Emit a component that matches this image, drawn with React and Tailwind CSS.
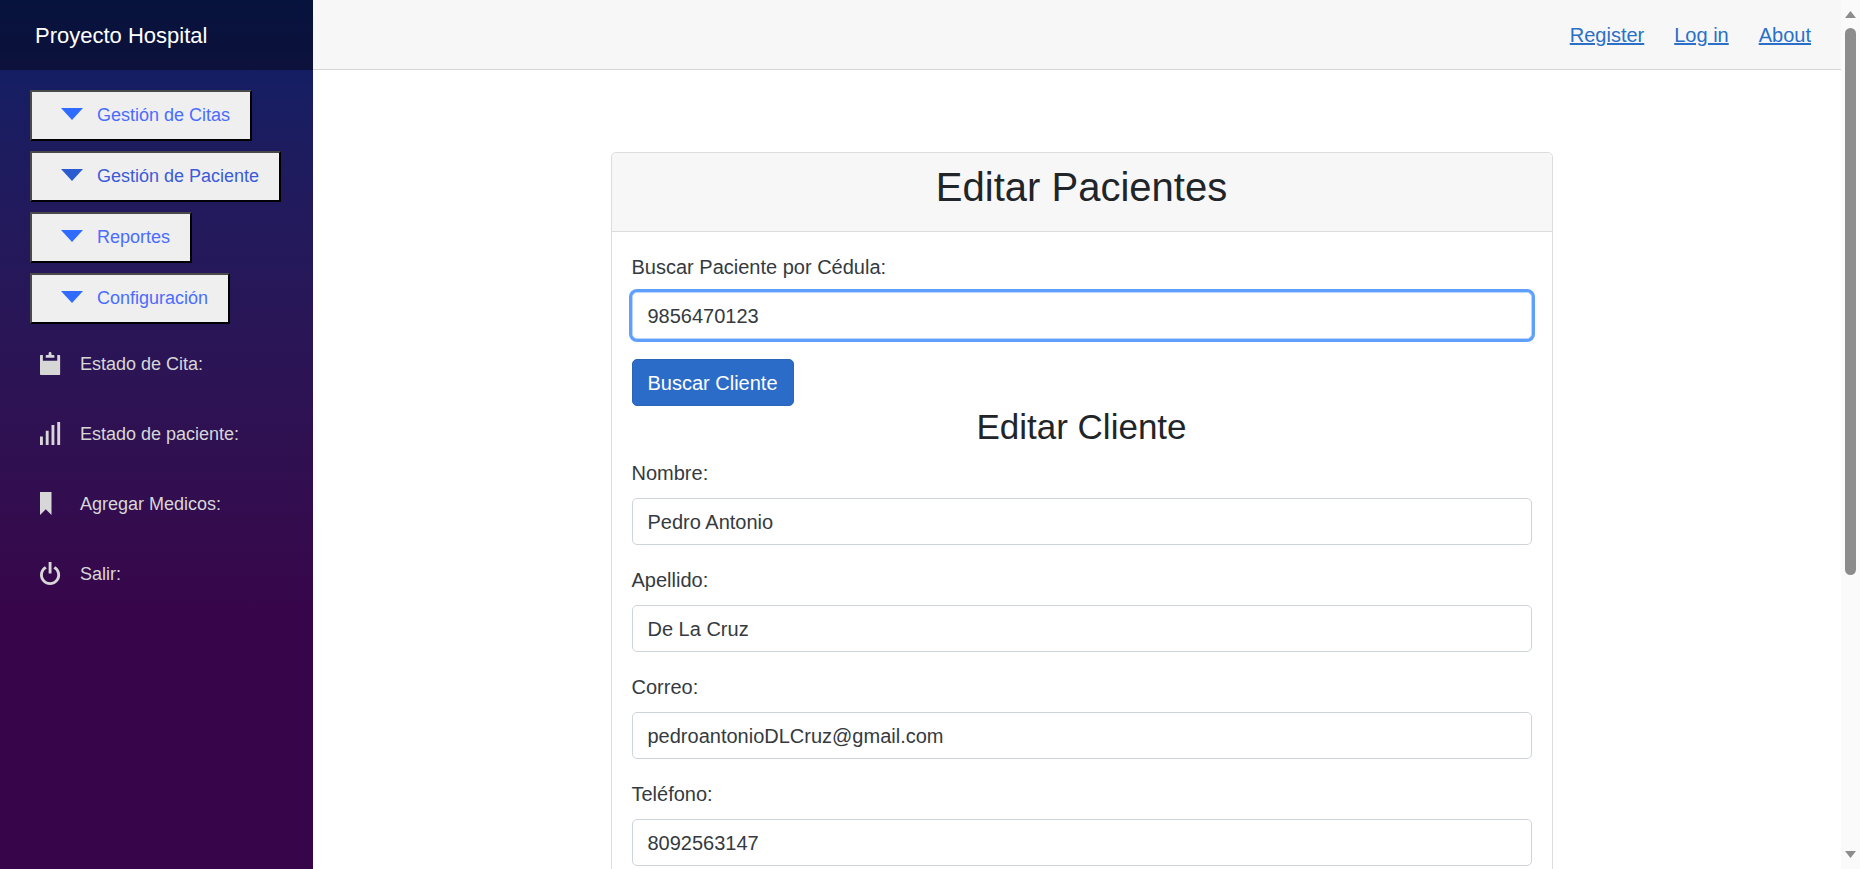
import React from 'react'

const sideButtons = [
  { label: 'Gestión de Citas', width: 'w-[222px]', tone: 'text-[#4a6cff]', arrow: '#2f6bff' },
  { label: 'Gestión de Paciente', width: 'w-[251px]', tone: 'text-[#3b5bd9]', arrow: '#2b5bd0' },
  { label: 'Reportes', width: 'w-[162px]', tone: 'text-[#4a6cff]', arrow: '#2f6bff' },
  { label: 'Configuración', width: 'w-[200px]', tone: 'text-[#4a6cff]', arrow: '#2f6bff' },
]

const sideLinks = [
  { label: 'Estado de Cita:', d: 'M3.5 0c-.28 0-.5.22-.5.5v.5h-.75c-.14 0-.25.11-.25.25v.75h3v-.75c0-.14-.11-.25-.25-.25h-.75v-.5c0-.28-.22-.5-.5-.5zm-3.25 1c-.14 0-.25.11-.25.25v6.5c0 .14.11.25.25.25h6.5c.14 0 .25-.11.25-.25v-6.5c0-.14-.11-.25-.25-.25h-.75v2h-5v-2h-.75z' },
  { label: 'Estado de paciente:', d: 'M6 0v8h1v-8h-1zm-2 1v7h1v-7h-1zm-2 2v5h1v-5h-1zm-2 2v3h1v-3h-1z' },
  { label: 'Agregar Medicos:', d: 'M0 0v8l2-2 2 2v-8h-4z' },
  { label: 'Salir:', d: 'M3 0v4h1v-4h-1zm-1.280 1.440l-.38.31c-.81.64-1.340 1.640-1.340 2.750 0 1.930 1.570 3.500 3.500 3.500s3.500-1.570 3.500-3.500c0-1.110-.53-2.110-1.340-2.750l-.38-.31-.63.78.38.31c.58.46.97 1.170.97 1.970 0 1.390-1.110 2.500-2.500 2.500s-2.500-1.110-2.500-2.500c0-.8.36-1.510.94-1.970l.41-.31-.63-.78z' },
]

const fields = [
  { label: 'Nombre:', value: 'Pedro Antonio' },
  { label: 'Apellido:', value: 'De La Cruz' },
  { label: 'Correo:', value: 'pedroantonioDLCruz@gmail.com' },
  { label: 'Teléfono:', value: '8092563147' },
]

export default function App() {
  return (
    <div className="flex h-screen overflow-hidden bg-white font-['Liberation_Sans',Arial,sans-serif] text-[20px] text-[#212529]">
      <aside className="flex w-[313px] shrink-0 flex-col bg-gradient-to-b from-[#0b2066] to-[#37064a] to-70%">
        <div className="flex h-[70px] items-center bg-black/40 pl-[35px] text-[22px] text-white">Proyecto Hospital</div>
        <div className="flex flex-col items-start gap-[10px] pl-[30px] pt-[20px]">
          {sideButtons.map((b) => (
            <button
              key={b.label}
              className={`flex h-[51px] items-center border-2 border-t-[#4a4a4a] border-l-[#4a4a4a] border-r-black border-b-black bg-[#efefef] pl-[29px] text-[18px] ${b.width} ${b.tone}`}
            >
              <svg width="22" height="12" viewBox="0 0 22 12" className="mb-[4px] shrink-0">
                <polygon points="0,0 22,0 11,12" fill={b.arrow} />
              </svg>
              <span className="ml-[14px] whitespace-nowrap">{b.label}</span>
            </button>
          ))}
        </div>
        <nav className="flex flex-col gap-[22px] pl-[40px] pt-[16px]">
          {sideLinks.map((l) => (
            <div key={l.label} className="flex h-[48px] items-center text-[18px] text-[#d7d7d7]">
              <svg width="23" height="23" viewBox="0 0 8 8" fill="currentColor" className="mb-[2px] mr-[17px] shrink-0">
                <path d={l.d} />
              </svg>
              <span>{l.label}</span>
            </div>
          ))}
        </nav>
      </aside>

      <div className="flex min-w-0 flex-1 flex-col">
        <header className="flex h-[70px] shrink-0 items-center justify-end gap-[30px] border-b border-[#d6d5d5] bg-[#f7f7f7] pr-[30px]">
          <a href="#" className="text-[#2a70c8] underline">Register</a>
          <a href="#" className="text-[#2a70c8] underline">Log in</a>
          <a href="#" className="text-[#2a70c8] underline">About</a>
        </header>
        <main className="flex flex-1 justify-center overflow-hidden pl-[9px] pt-[82px]">
          <section className="h-fit w-[942px] shrink-0 rounded-[5px] border border-[#dcdcdc]">
            <div className="flex h-[79px] items-start justify-center rounded-t-[5px] border-b border-[#dcdcdc] bg-[#f7f7f7] pt-[10px] text-[40px] leading-[48px]">
              Editar Pacientes
            </div>
            <div className="px-[20px] pt-[20px]">
              <label className="mb-[10px] block leading-[30px] text-[#343a40]">Buscar Paciente por Cédula:</label>
              <input
                readOnly
                value="9856470123"
                className="block h-[47px] w-full rounded-[5px] border border-[#bcd7ff] bg-white px-[15px] pt-[2px] text-[#343a40] shadow-[0_0_0_3px_#5fa0ff] outline-none"
              />
              <button className="mt-[20px] h-[47px] w-[162px] rounded-[5px] border border-[#2a65b8] bg-[#2b6cc9] text-white">
                Buscar Cliente
              </button>
              <h2 className="mb-[10px] text-center text-[35px] leading-[42px]">Editar Cliente</h2>
              {fields.map((f) => (
                <div key={f.label} className="mb-[20px]">
                  <label className="mb-[10px] block leading-[30px] text-[#343a40]">{f.label}</label>
                  <input
                    readOnly
                    value={f.value}
                    className="block h-[47px] w-full rounded-[5px] border border-[#ced4da] bg-white px-[15px] pt-[2px] text-[#343a40] outline-none"
                  />
                </div>
              ))}
            </div>
          </section>
        </main>
      </div>

      <div className="flex w-[19px] shrink-0 flex-col items-center bg-[#fafafa]">
        <svg width="11" height="7" viewBox="0 0 11 7" className="mt-[11px] shrink-0">
          <polygon points="5.5,0 11,7 0,7" fill="#8c8c8c" />
        </svg>
        <div className="mt-[10px] h-[547px] w-[11px] shrink-0 rounded-full bg-[#8c8c8c]" />
        <svg width="11" height="7" viewBox="0 0 11 7" className="mb-[11px] mt-auto shrink-0">
          <polygon points="0,0 11,0 5.5,7" fill="#8c8c8c" />
        </svg>
      </div>
    </div>
  )
}
